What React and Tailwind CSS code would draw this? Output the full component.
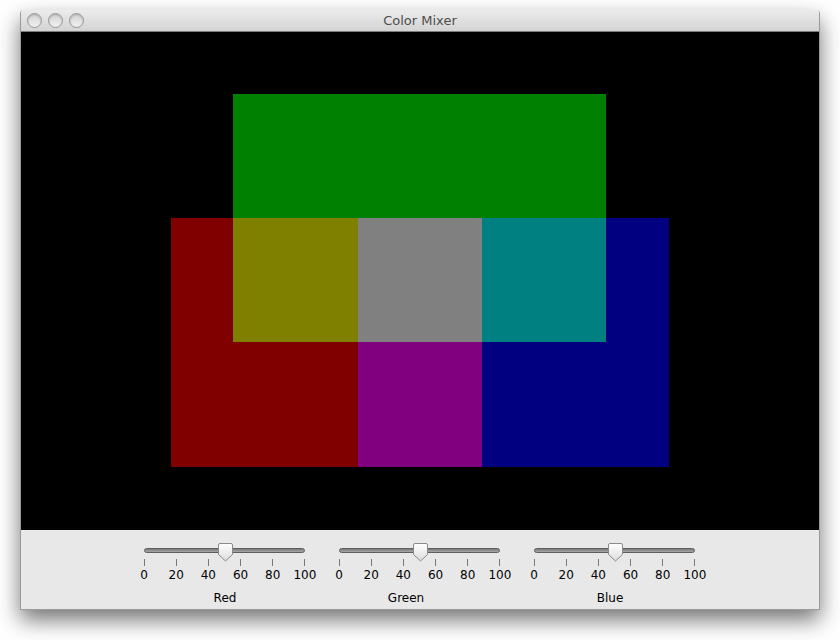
import React from "react";

const ticks = [0, 20, 40, 60, 80, 100];

function Slider({ label, labelW }) {
  return (
    <div className="flex w-[161px] flex-col">
      <div className="relative h-[16px]">
        <div className="mt-[5px] h-[5px] rounded-full border border-[#5e5e5e] bg-gradient-to-b from-[#7a7a7a] to-[#a8a8a8]" />
        <svg className="absolute left-[74px] top-0" width="15" height="19" viewBox="0 0 15 19">
          <defs>
            <linearGradient id={`g${label}`} x1="0" y1="0" x2="0" y2="1">
              <stop offset="0" stopColor="#ffffff" />
              <stop offset="1" stopColor="#dcdcdc" />
            </linearGradient>
          </defs>
          <path d="M2 0.5 H13 Q14.5 0.5 14.5 2 V11.5 L7.5 18 L0.5 11.5 V2 Q0.5 0.5 2 0.5 Z" fill={`url(#g${label})`} stroke="#8a8a8a" strokeWidth="1" />
        </svg>
      </div>
      <div className="flex h-[7px] justify-between">
        {ticks.map((t) => (
          <div key={t} className="flex w-0 justify-center">
            <div className="h-[7px] w-px shrink-0 bg-[#7a7a7a]" />
          </div>
        ))}
      </div>
      <div className="mt-[2px] flex h-[14px] justify-between text-[12px] leading-[14px] text-black">
        {ticks.map((t) => (
          <div key={t} className="flex w-0 justify-center whitespace-nowrap">
            <span>{t}</span>
          </div>
        ))}
      </div>
      <div className="mt-[9px] text-center text-[12px] leading-[14px] text-black" style={{ width: labelW }}>
        {label}
      </div>
    </div>
  );
}

export default function App() {
  return (
    <div className="h-[640px] w-[840px] bg-white pl-[20px] pt-[10px]" style={{ fontFamily: '"DejaVu Sans", "Liberation Sans", sans-serif' }}>
      <div className="flex h-[600px] w-[800px] flex-col overflow-hidden rounded-t-[4px] border-x border-b border-[#9a9a9a] shadow-[0_10px_22px_rgba(0,0,0,0.55)]">
        <div className="relative flex h-[22px] shrink-0 items-center justify-center border-b border-[#7c7c7c] bg-gradient-to-b from-[#ececec] to-[#d3d3d3]">
          <div className="absolute left-[6px] top-[3px] flex gap-[6px]">
            {[0, 1, 2].map((i) => (
              <div key={i} className="h-[15px] w-[15px] rounded-full border border-[#969696] bg-gradient-to-b from-[#d2d2d2] to-[#f2f2f2] shadow-[inset_0_1px_2px_rgba(0,0,0,0.2)]" />
            ))}
          </div>
          <span className="text-[13px] text-[#4d4d4d]">Color Mixer</span>
        </div>
        <div className="h-[498px] shrink-0 bg-black">
          <svg width="798" height="498" viewBox="0 0 798 498">
            <rect x="150" y="186" width="311" height="249" fill="#800000" />
            <rect x="337" y="186" width="311" height="249" fill="#000080" />
            <rect x="212" y="62" width="373" height="124" fill="#008000" />
            <rect x="212" y="186" width="125" height="124" fill="#808000" />
            <rect x="337" y="186" width="124" height="124" fill="#808080" />
            <rect x="461" y="186" width="124" height="124" fill="#008080" />
            <rect x="337" y="310" width="124" height="125" fill="#800080" />
          </svg>
        </div>
        <div className="flex flex-1 gap-[34px] bg-[#e8e8e8] pl-[123px] pt-[13px]">
          <Slider label="Red" labelW="162px" />
          <Slider label="Green" labelW="134px" />
          <Slider label="Blue" labelW="152px" />
        </div>
      </div>
    </div>
  );
}
